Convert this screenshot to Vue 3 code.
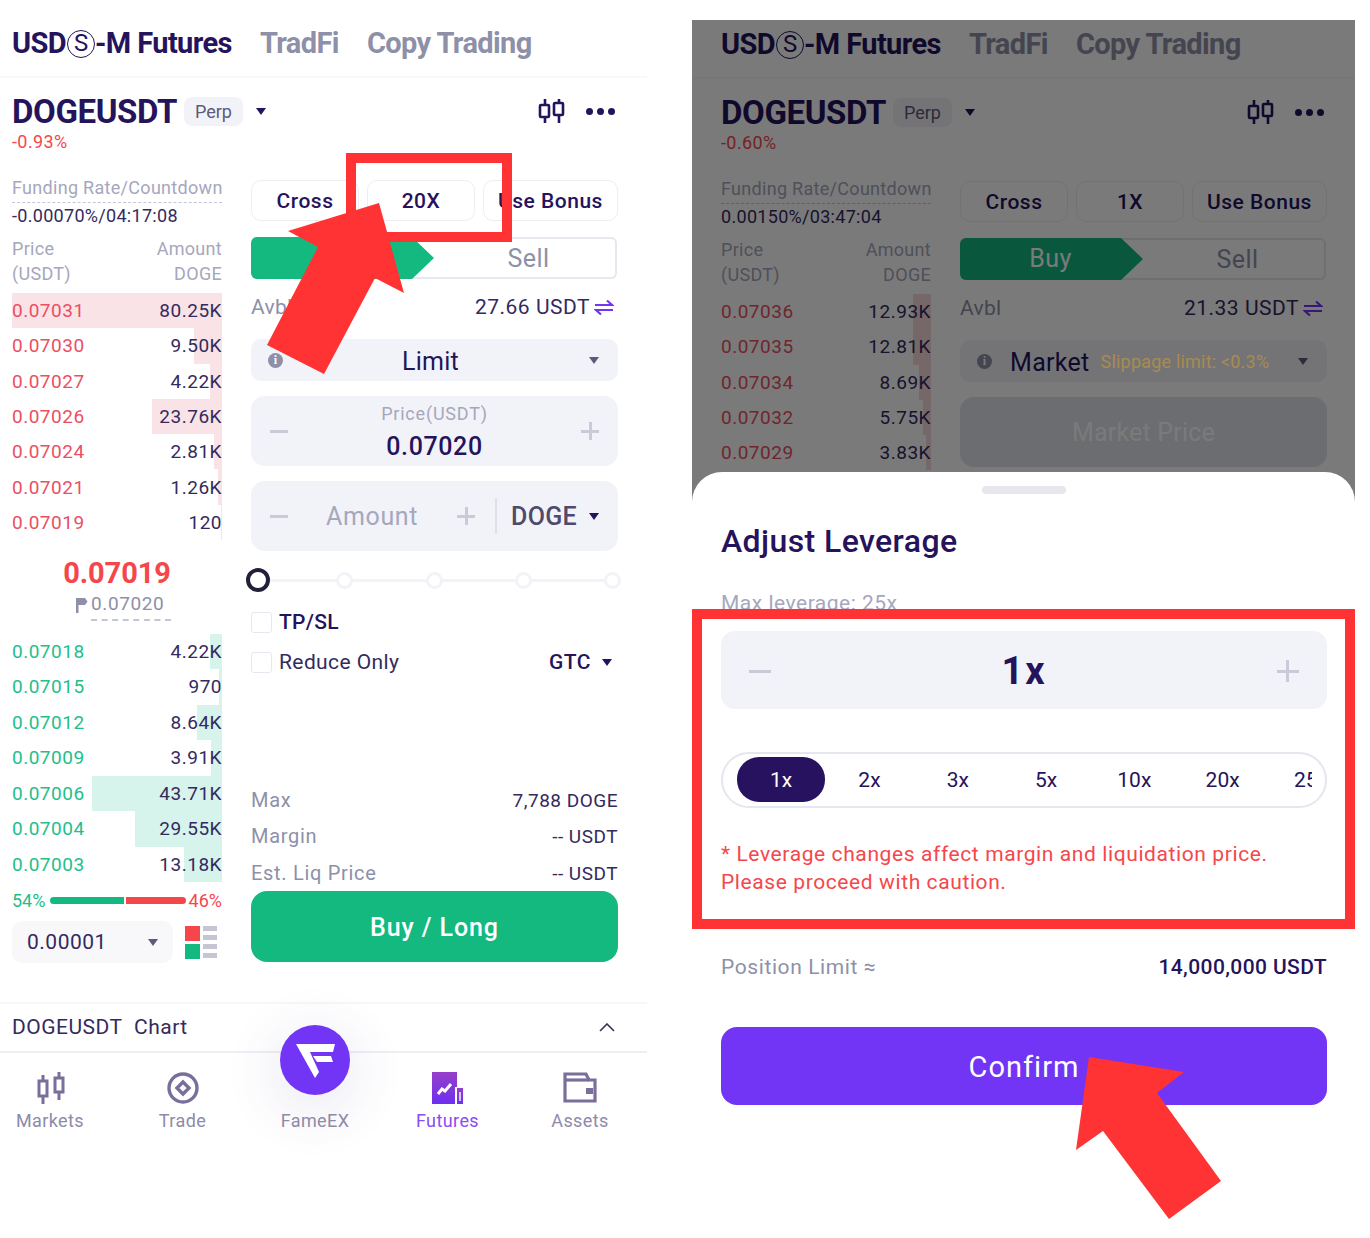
<template>
  <div class="page">
    <section
      v-for="s in screens"
      :key="s.id"
      class="screen"
      :class="s.id"
    >
      <div class="tabs">
        <span class="tab active">USD<span class="circled">S</span>-M Futures</span>
        <span class="tab">TradFi</span>
        <span class="tab">Copy Trading</span>
      </div>

      <div class="head">
        <h1 class="symbol">DOGEUSDT</h1>
        <span class="perp">Perp</span>
        <i class="caret dark head-caret"></i>
        <div class="head-icons">
          <svg width="28" height="26" viewBox="0 0 28 26" fill="none" stroke="#25135c" stroke-width="2.6">
            <path d="M7 1v24M21 1v24" />
            <rect x="2" y="7" width="9" height="12" rx="1" fill="#fff" />
            <rect x="16" y="5" width="9" height="12" rx="1" fill="#fff" />
          </svg>
          <span class="dots"><b></b><b></b><b></b></span>
        </div>
      </div>
      <div class="change">{{ s.change }}</div>

      <div class="trade">
        <div class="book">
          <div class="funding-label">Funding Rate/Countdown</div>
          <div class="funding-value">{{ s.funding }}</div>
          <div class="book-head">
            <div class="book-line"><span>Price</span><span>Amount</span></div>
            <div class="book-line"><span>(USDT)</span><span>DOGE</span></div>
          </div>
          <div v-for="r in s.asks" :key="r.price" class="row ask">
            <i class="depth" :style="{ width: r.depth + 'px' }"></i>
            <span class="price">{{ r.price }}</span>
            <span class="amount">{{ r.amount }}</span>
          </div>
          <template v-if="s.full">
            <div class="last-price">0.07019</div>
            <div class="mark">
              <svg width="13" height="16" viewBox="0 0 13 16" fill="#8e90a8">
                <path d="M1 1h9l2.5 3.5L10 8H3.500v8H1z" />
              </svg>
              <span class="mark-value">0.07020</span>
            </div>
            <div v-for="r in bids" :key="r.price" class="row bid">
              <i class="depth" :style="{ width: r.depth + 'px' }"></i>
              <span class="price">{{ r.price }}</span>
              <span class="amount">{{ r.amount }}</span>
            </div>
            <div class="ratio">
              <span class="up">54%</span>
              <div class="ratio-bar"><i class="g"></i><i class="r"></i></div>
              <span class="down">46%</span>
            </div>
            <div class="precision-row">
              <div class="precision">
                <span>0.00001</span>
                <i class="caret gray"></i>
              </div>
              <div class="layout-icon">
                <div class="squares"><i class="sq-r"></i><i class="sq-g"></i></div>
                <div class="bars"><i></i><i></i><i></i><i></i></div>
              </div>
            </div>
          </template>
        </div>

        <div class="form">
          <div class="options">
            <button class="opt w-s">Cross</button>
            <button class="opt w-s">{{ s.leverage }}</button>
            <button class="opt w-l">Use Bonus</button>
          </div>
          <div class="side">
            <div class="buy">Buy</div>
            <div class="sell">Sell</div>
          </div>
          <div class="avbl">
            <span class="avbl-label">Avbl</span>
            <span class="avbl-value">
              {{ s.avbl }} USDT
              <svg width="20" height="17" viewBox="0 0 20 17" fill="none" stroke="#7335f5" stroke-width="2.2">
                <path d="M1 6h17L13 1.500M19 11H2l5 4.500" />
              </svg>
            </span>
          </div>

          <div class="type">
            <span class="info">i</span>
            <span v-if="s.full" class="type-name center">Limit</span>
            <template v-else>
              <span class="type-name">Market</span>
              <span class="slip">Slippage limit: &lt;0.3%</span>
            </template>
            <i class="caret gray"></i>
          </div>

          <template v-if="s.full">
            <div class="box price-box">
              <i class="minus"></i>
              <div class="box-text">
                <div class="box-label">Price(USDT)</div>
                <div class="box-value">0.07020</div>
              </div>
              <i class="plus"></i>
            </div>
            <div class="box amount-box">
              <i class="minus"></i>
              <span class="amount-text">Amount</span>
              <i class="plus"></i>
              <span class="sep"></span>
              <span class="unit">DOGE</span>
              <i class="caret dark unit-caret"></i>
            </div>
            <div class="slider">
              <i class="thumb"></i>
              <i v-for="n in 4" :key="n" class="node"></i>
            </div>
            <label class="check first"><i></i>TP/SL</label>
            <div class="check-row">
              <label class="check plain"><i></i>Reduce Only</label>
              <span class="gtc">GTC <i class="caret dark"></i></span>
            </div>
            <div class="stat max"><span>Max</span><b>7,788 DOGE</b></div>
            <div class="stat margin"><span>Margin</span><b>-- USDT</b></div>
            <div class="stat liq"><span>Est. Liq Price</span><b>-- USDT</b></div>
            <button class="long">Buy / Long</button>
          </template>
          <div v-else class="box market-box">Market Price</div>
        </div>
      </div>

      <template v-if="s.full">
        <div class="chart-row">
          <span>DOGEUSDT&nbsp;&nbsp;Chart</span>
          <svg width="16" height="9" viewBox="0 0 16 9" fill="none" stroke="#3a3159" stroke-width="1.6">
            <path d="M1 8l7-7 7 7" />
          </svg>
        </div>
        <nav class="tabbar">
          <div class="nav-item">
            <svg width="32" height="32" viewBox="0 0 32 32" fill="none" stroke="#7a6f9b" stroke-width="3">
              <path d="M9 3v29M25 0v28" />
              <rect x="5" y="9" width="8" height="15" fill="#fff" />
              <rect x="21" y="6" width="8" height="14" fill="#fff" />
            </svg>
            <span>Markets</span>
          </div>
          <div class="nav-item">
            <svg width="32" height="32" viewBox="0 0 32 32" fill="none" stroke="#7a6f9b" stroke-width="3.4">
              <circle cx="16" cy="16" r="14" />
              <path d="M16 10l6 6-6 6-6-6z" />
            </svg>
            <span>Trade</span>
          </div>
          <div class="nav-item fame">
            <div class="fab">
              <svg width="70" height="70" viewBox="0 0 70 70" fill="#fff">
                <path d="M16 19h39l-2 8H30l9 20-4 6z" />
                <path d="M33 31h18l2 6H37z" />
              </svg>
            </div>
            <span>FameEX</span>
          </div>
          <div class="nav-item current">
            <svg width="32" height="32" viewBox="0 0 32 32">
              <defs>
                <linearGradient id="futures-fill" x1="0" y1="0" x2="0" y2="1">
                  <stop offset="0" stop-color="#9640c8" />
                  <stop offset="1" stop-color="#6d2ff0" />
                </linearGradient>
              </defs>
              <path d="M0 0h25v15h-2v17H0z" fill="url(#futures-fill)" />
              <path d="M25 16h6v16h-6z" fill="url(#futures-fill)" />
              <path d="M28 20v9" stroke="#fff" stroke-width="1.4" />
              <path d="M6 22l4-5 3 2 6-7" fill="none" stroke="#fff" stroke-width="3" />
            </svg>
            <span>Futures</span>
          </div>
          <div class="nav-item">
            <svg width="34" height="32" viewBox="0 0 34 32" fill="none" stroke="#7a6f9b" stroke-width="3.2">
              <path d="M2 29V2h21l3 6h6v21z" />
              <path d="M2 8h24" />
              <path d="M23 16h7v6h-7z" fill="#7a6f9b" stroke="none" />
            </svg>
            <span>Assets</span>
          </div>
        </nav>
      </template>

      <template v-else>
        <div class="dim"></div>
        <div class="sheet">
          <div class="handle"></div>
          <h2 class="sheet-title">Adjust Leverage</h2>
          <div class="max-lev">Max leverage: 25x</div>
          <div class="stepper">
            <i class="minus"></i>
            <span class="stepper-value">1x</span>
            <i class="plus"></i>
          </div>
          <div class="pills">
            <div class="pills-inner">
              <span
                v-for="(p, i) in levels"
                :key="p"
                class="pill"
                :class="{ on: i === 0 }"
              >{{ p }}</span>
            </div>
          </div>
          <p class="warn">* Leverage changes affect margin and liquidation price.<br>Please proceed with caution.</p>
          <div class="limit"><span>Position Limit ≈</span><b>14,000,000 USDT</b></div>
          <button class="confirm">Confirm</button>
        </div>
      </template>
    </section>

    <svg class="marks" width="1370" height="1238" viewBox="0 0 1370 1238">
      <rect x="351" y="158" width="156" height="79" fill="none" stroke="#ff3333" stroke-width="10" />
      <path d="M379 203L404 293 375 278 324 374 267 345 318 247 288 231z" fill="#ff3333" />
      <rect x="697" y="614" width="653" height="310" fill="none" stroke="#ff3333" stroke-width="10" />
      <path d="M1089 1057L1184 1072 1157 1093 1221 1181 1169 1219 1103 1131 1076 1150z" fill="#ff3333" />
    </svg>
  </div>
</template>

<script setup>
const levels = ["1x", "2x", "3x", "5x", "10x", "20x", "25x"];

const bids = [
  { price: "0.07018", amount: "4.22K", depth: 12 },
  { price: "0.07015", amount: "970", depth: 3 },
  { price: "0.07012", amount: "8.64K", depth: 25 },
  { price: "0.07009", amount: "3.91K", depth: 11 },
  { price: "0.07006", amount: "43.71K", depth: 130 },
  { price: "0.07004", amount: "29.55K", depth: 87 },
  { price: "0.07003", amount: "13.18K", depth: 38 },
];

const screens = [
  {
    id: "left",
    full: true,
    change: "-0.93%",
    funding: "-0.00070%/04:17:08",
    leverage: "20X",
    avbl: "27.66",
    asks: [
      { price: "0.07031", amount: "80.25K", depth: 210 },
      { price: "0.07030", amount: "9.50K", depth: 28 },
      { price: "0.07027", amount: "4.22K", depth: 12 },
      { price: "0.07026", amount: "23.76K", depth: 70 },
      { price: "0.07024", amount: "2.81K", depth: 8 },
      { price: "0.07021", amount: "1.26K", depth: 4 },
      { price: "0.07019", amount: "120", depth: 1 },
    ],
  },
  {
    id: "right",
    full: false,
    change: "-0.60%",
    funding: "0.00150%/03:47:04",
    leverage: "1X",
    avbl: "21.33",
    asks: [
      { price: "0.07036", amount: "12.93K", depth: 18 },
      { price: "0.07035", amount: "12.81K", depth: 18 },
      { price: "0.07034", amount: "8.69K", depth: 12 },
      { price: "0.07032", amount: "5.75K", depth: 8 },
      { price: "0.07029", amount: "3.83K", depth: 5 },
    ],
  },
];
</script>

<style>
html,
body {
  margin: 0;
  background: #fff;
}
</style>

<style scoped>
* {
  box-sizing: border-box;
}

.page {
  position: relative;
  display: flex;
  width: 1370px;
  height: 1238px;
  padding-top: 20px;
  overflow: hidden;
  font-family: Roboto, "Liberation Sans", sans-serif;
  color: #25135c;
  background: #fff;
}

.marks {
  position: absolute;
  left: 0;
  top: 0;
  z-index: 3;
  pointer-events: none;
}

.screen {
  position: relative;
  flex: none;
  --pad: 12px;
  width: 647px;
}

.screen.right {
  --pad: 29px;
  width: 663px;
  height: 1218px;
  margin-left: 45px;
  padding-top: 1px;
  overflow: hidden;
}

.dim {
  position: absolute;
  inset: 0;
  background: rgba(0, 0, 0, 0.52);
}

/* top tabs */
.tabs {
  display: flex;
  align-items: center;
  gap: 28px;
  height: 58px;
  padding: 0 0 10px var(--pad);
  border-bottom: 2px solid #f9f9fb;
}

.tab {
  font-size: 29px;
  font-weight: 700;
  letter-spacing: -0.6px;
  color: #8e90a8;
  white-space: nowrap;
}

.tab.active {
  color: #25135c;
}

.circled {
  display: inline-block;
  width: 28px;
  height: 28px;
  margin: 0 0 0 1px;
  border: 1.5px solid #25135c;
  border-radius: 50%;
  font-size: 24px;
  font-weight: 400;
  line-height: 25px;
  letter-spacing: 0;
  text-align: center;
  vertical-align: 2px;
}

/* symbol head */
.head {
  display: flex;
  align-items: center;
  margin-top: 18px;
  padding-left: var(--pad);
  height: 30px;
  width: calc(606px + var(--pad));
}

.symbol {
  margin: 0;
  font-size: 33px;
  font-weight: 700;
  letter-spacing: -0.4px;
}

.perp {
  display: flex;
  align-items: center;
  justify-content: center;
  width: 59px;
  height: 29px;
  margin-left: 7px;
  border-radius: 8px;
  background: #f2f3f8;
  color: #5c5b7c;
  font-size: 18px;
}

.head-caret {
  margin-left: 13px;
}

.head-icons {
  display: flex;
  align-items: center;
  gap: 20px;
  margin-left: auto;
  margin-right: 3px;
}

.dots {
  display: flex;
  gap: 4px;
}

.dots b {
  width: 7px;
  height: 7px;
  border-radius: 50%;
  background: #25135c;
}

.change {
  margin-top: 4px;
  padding-left: var(--pad);
  height: 24px;
  font-size: 18px;
  line-height: 24px;
  letter-spacing: 0.4px;
  color: #f5474b;
}

.trade {
  display: grid;
  grid-template-columns: 210px 367px;
  column-gap: 29px;
  margin-top: 24px;
  padding-left: var(--pad);
}

/* order book */
.book {
  font-size: 19px;
}

.funding-label {
  height: 25px;
  border-bottom: 1.5px dashed #c5c6d5;
  color: #a5a7bd;
  font-size: 18px;
  line-height: 20px;
  white-space: nowrap;
  letter-spacing: 0.3px;
}

.funding-value {
  height: 26px;
  font-size: 18px;
  line-height: 26px;
  letter-spacing: 0.3px;
  color: #342a5e;
}

.book-head {
  margin: 7px 0;
  color: #a5a7bd;
  font-size: 18px;
  line-height: 25px;
  letter-spacing: 0.3px;
}

.book-line,
.row {
  display: flex;
  justify-content: space-between;
}

.row {
  position: relative;
  height: 35.3px;
  align-items: center;
  letter-spacing: 0.5px;
}

.row.bid {
  height: 35.5px;
}

.row span {
  position: relative;
}

.depth {
  position: absolute;
  top: 0;
  right: 0;
  bottom: 0;
}

.ask .depth {
  background: #f9e3e6;
}

.bid .depth {
  background: #d6f3ec;
}

.ask .price {
  color: #ea4f62;
}

.bid .price {
  color: #1ec08b;
}

.amount {
  color: #342a5e;
}

.right .ask .depth {
  background: #f6d8dc;
}

.last-price {
  margin-top: 16.5px;
  height: 32px;
  color: #f5474b;
  font-size: 29px;
  font-weight: 700;
  line-height: 32px;
  letter-spacing: -0.1px;
  text-align: center;
}

.mark {
  display: flex;
  align-items: center;
  gap: 3px;
  height: 32px;
  margin-bottom: 13px;
  padding-left: 63px;
  color: #8e90a8;
  font-size: 19px;
}

.mark-value {
  width: 80px;
  height: 32px;
  line-height: 30px;
  letter-spacing: 0.6px;
  border-bottom: 2px dashed #c5c6d5;
}

.ratio {
  display: flex;
  align-items: center;
  justify-content: space-between;
  height: 20px;
  margin-top: 8px;
  font-size: 18px;
}

.up {
  color: #1ec08b;
}

.down {
  color: #f5474b;
}

.ratio-bar {
  display: flex;
  gap: 2px;
  width: 136px;
  height: 7px;
  margin-left: 1px;
}

.ratio-bar .g {
  flex: 74;
  background: #14b97f;
  border-radius: 4px 0 0 4px;
}

.ratio-bar .r {
  flex: 60;
  background: #f5474b;
  border-radius: 0 4px 4px 0;
}

.precision-row {
  display: flex;
  align-items: center;
  margin-top: 11px;
}

.precision {
  display: flex;
  align-items: center;
  justify-content: space-between;
  width: 161px;
  height: 42px;
  padding: 0 15px;
  border-radius: 10px;
  background: #f8f8fa;
  font-size: 21px;
  letter-spacing: 0.5px;
  color: #342a5e;
}

.layout-icon {
  display: flex;
  gap: 3px;
  margin-left: 12px;
}

.squares {
  display: flex;
  flex-direction: column;
  gap: 3px;
}

.squares i {
  width: 15px;
  height: 15px;
}

.sq-r {
  background: #f5474b;
}

.sq-g {
  background: #14b97f;
}

.bars {
  display: flex;
  flex-direction: column;
  gap: 4px;
}

.bars i {
  width: 14px;
  height: 5px;
  background: #c5c5d3;
}

/* form */
.form {
  padding-top: 2px;
}

.options {
  display: flex;
  gap: 8px;
}

.opt {
  height: 41px;
  padding: 0;
  border: 1.5px solid #edeef3;
  border-radius: 10px;
  background: #fff;
  font-family: inherit;
  font-size: 21px;
  font-weight: 500;
  letter-spacing: 0.5px;
  color: #25135c;
}

.w-s {
  width: 108px;
}

.w-l {
  width: 135px;
}

.side {
  display: flex;
  height: 42px;
  margin-top: 16px;
  border: 2px solid #e7e8ef;
  border-left: 0;
  border-radius: 6px;
  width: 366px;
  font-size: 25px;
  letter-spacing: 0.4px;
}

.buy {
  width: 183px;
  height: 42px;
  margin-top: -2px;
  padding-right: 2px;
  border-radius: 6px 0 0 6px;
  background: #14b97f;
  clip-path: polygon(0 0, 161px 0, 183px 21px, 161px 42px, 0 42px);
  color: #fff;
  line-height: 42px;
  text-align: center;
}

.sell {
  flex: 1;
  padding-left: 8px;
  line-height: 40px;
  text-align: center;
  color: #8e90a8;
}

.avbl {
  display: flex;
  justify-content: space-between;
  align-items: center;
  height: 28px;
  margin-top: 14px;
  padding-right: 4px;
}

.avbl-label {
  color: #8e90a8;
  font-size: 21px;
  letter-spacing: 0.3px;
}

.avbl-value {
  display: flex;
  align-items: center;
  gap: 4px;
  font-size: 21px;
  letter-spacing: 0.5px;
  color: #342a5e;
}

.type {
  position: relative;
  display: flex;
  align-items: center;
  height: 42px;
  margin-top: 18px;
  padding: 0 19px 0 17px;
  border-radius: 10px;
  background: #f2f3f8;
}

.info {
  width: 15px;
  height: 15px;
  border-radius: 50%;
  background: #8e90a8;
  color: #fff;
  font-family: "Liberation Serif", serif;
  font-size: 12px;
  font-weight: 700;
  line-height: 15px;
  text-align: center;
}

.type-name {
  margin-left: 18px;
  padding-top: 2px;
  font-size: 25px;
  letter-spacing: 0.3px;
}

.type-name.center {
  flex: 1;
  margin-left: 0;
  padding-right: 11px;
  text-align: center;
}

.slip {
  position: relative;
  z-index: 1;
  flex: 1;
  margin-left: 11px;
  color: #a88b50;
  font-size: 18px;
  letter-spacing: 0.2px;
  white-space: nowrap;
}

.caret {
  display: inline-block;
  flex: none;
  width: 0;
  height: 0;
  border-left: 5.5px solid transparent;
  border-right: 5.5px solid transparent;
  border-top: 7px solid;
}

.caret.dark {
  border-top-color: #25135c;
}

.caret.gray {
  border-top-color: #5c5b7c;
}

.box {
  display: flex;
  align-items: center;
  height: 70px;
  margin-top: 15px;
  padding: 0 19px;
  border-radius: 14px;
  background: #f2f3f8;
}

.minus,
.plus {
  position: relative;
  flex: none;
  width: 18px;
  height: 18px;
}

.minus::before,
.plus::before,
.plus::after {
  content: "";
  position: absolute;
  background: #c9cbd9;
}

.minus::before,
.plus::before {
  left: 0;
  top: 8px;
  width: 18px;
  height: 2.5px;
}

.plus::after {
  left: 8px;
  top: 0;
  width: 2.5px;
  height: 18px;
}

.box-text {
  flex: 1;
  padding-top: 3px;
  text-align: center;
}

.box-label {
  color: #a5a7bd;
  font-size: 18px;
  letter-spacing: 0.8px;
  line-height: 20px;
  margin-bottom: 8px;
}

.box-value {
  font-size: 25px;
  font-weight: 500;
  line-height: 30px;
  letter-spacing: 0.6px;
}

.amount-text {
  flex: 1;
  padding-right: 1px;
  color: #a5a7bd;
  font-size: 25px;
  letter-spacing: 0.6px;
  text-align: center;
}

.sep {
  width: 2px;
  height: 36px;
  margin: 0 14px 0 20px;
  background: #dfe0e8;
}

.unit {
  font-size: 25px;
  font-weight: 500;
  letter-spacing: 0.3px;
  color: #4e4a6d;
}

.unit-caret {
  margin-left: 12px;
}

.market-box {
  position: relative;
  justify-content: center;
  background: #e1e3ea;
  color: #fff;
  font-size: 25px;
  letter-spacing: 0.2px;
}

.slider {
  position: relative;
  display: flex;
  align-items: center;
  gap: 72.25px;
  height: 26px;
  margin: 16px 0 0 -5px;
}

.slider::before {
  content: "";
  position: absolute;
  left: 10px;
  right: -2px;
  top: 12px;
  height: 3px;
  background: #f2f3f8;
}

.thumb {
  position: relative;
  flex: none;
  width: 24px;
  height: 24px;
  margin-right: -6px;
  border: 4px solid #20203a;
  border-radius: 50%;
  background: #fff;
}

.node {
  position: relative;
  flex: none;
  width: 17px;
  height: 17px;
  border: 3px solid #f2f3f8;
  border-radius: 50%;
  background: #fff;
}

.check {
  display: flex;
  align-items: center;
  gap: 7px;
  height: 24px;
  font-size: 21px;
  font-weight: 500;
  letter-spacing: 0.3px;
}

.check.first {
  margin-top: 17px;
}

.check.plain {
  font-weight: 400;
  letter-spacing: 0.4px;
  color: #342a5e;
}

.check i {
  width: 21px;
  height: 21px;
  border: 1.5px solid #e7e8ef;
  border-radius: 3px;
}

.check-row {
  display: flex;
  justify-content: space-between;
  align-items: center;
  margin-top: 16px;
}

.gtc {
  display: flex;
  align-items: center;
  gap: 11px;
  padding-right: 6px;
  font-size: 21px;
  font-weight: 500;
  letter-spacing: 0.5px;
}

.stat {
  display: flex;
  justify-content: space-between;
  align-items: center;
  height: 24px;
  color: #8e90a8;
  font-size: 20px;
  letter-spacing: 0.7px;
}

.stat b {
  font-size: 19px;
  font-weight: 400;
  letter-spacing: 0.5px;
  color: #342a5e;
}

.stat.max {
  margin-top: 114px;
}

.stat.margin {
  margin-top: 12px;
}

.stat.liq {
  margin-top: 13px;
}

.long {
  display: block;
  width: 367px;
  height: 71px;
  margin-top: 6px;
  padding-top: 2px;
  border: 0;
  border-radius: 16px;
  background: #14b97f;
  color: #fff;
  font-family: inherit;
  font-size: 25px;
  font-weight: 500;
  letter-spacing: 0.9px;
}

/* bottom */
.chart-row {
  display: flex;
  justify-content: space-between;
  align-items: center;
  height: 51px;
  margin-top: 39px;
  padding: 0 32px 1px var(--pad);
  border-top: 2px solid #f7f7f9;
  border-bottom: 2px solid #eeeef4;
  font-size: 21px;
  letter-spacing: 0.5px;
  color: #342a5e;
}

.tabbar {
  display: flex;
  gap: 32.5px;
}

.nav-item {
  position: relative;
  display: flex;
  flex-direction: column;
  align-items: center;
  width: 100px;
  padding-top: 19px;
  color: #8e8aa8;
  font-size: 18px;
  letter-spacing: 0.4px;
}

.nav-item span {
  position: relative;
  margin-top: 7px;
  line-height: 20px;
}

.nav-item.current {
  color: #8a4cf5;
}

.fame {
  padding-top: 51px;
}

.fab {
  position: absolute;
  left: 15px;
  top: -28px;
  width: 70px;
  height: 70px;
  border-radius: 50%;
  background: #7335f5;
  box-shadow: 0 12px 46px 16px rgba(70, 50, 140, 0.07);
}

.fab svg {
  display: block;
}

/* leverage sheet */
.sheet {
  position: absolute;
  left: 0;
  right: 0;
  top: 452px;
  bottom: 0;
  z-index: 2;
  padding: 14px 28px 0 29px;
  border-radius: 30px 30px 0 0;
  background: #fff;
}

.handle {
  width: 84px;
  height: 8px;
  margin: 0 auto;
  border-radius: 4px;
  background: #e6e6ec;
}

.sheet-title {
  margin: 27px 0 0;
  font-size: 32px;
  font-weight: 500;
  line-height: 40px;
  letter-spacing: 0.4px;
}

.max-lev {
  height: 24px;
  margin-top: 30px;
  color: #a5a7bd;
  font-size: 21px;
  line-height: 24px;
  letter-spacing: 0.5px;
}

.stepper {
  display: flex;
  align-items: center;
  justify-content: space-between;
  height: 78px;
  margin-top: 16px;
  padding: 2px 28px 0;
  border-radius: 14px;
  background: #f2f3f8;
}

.stepper .minus,
.stepper .plus {
  width: 22px;
  height: 22px;
}

.stepper .minus::before,
.stepper .plus::before {
  top: 9.5px;
  width: 22px;
  height: 3px;
}

.stepper .plus::after {
  left: 9.5px;
  width: 3px;
  height: 22px;
}

.stepper-value {
  font-size: 38px;
  font-weight: 700;
  letter-spacing: 2px;
}

.pills {
  height: 56px;
  margin-top: 43px;
  padding: 3px 13px 3px 14px;
  border: 2px solid #e6e7ee;
  border-radius: 28px;
}

.pills-inner {
  display: flex;
  overflow: hidden;
}

.pill {
  flex: none;
  width: 88.3px;
  height: 45px;
  border-radius: 22px;
  font-size: 21px;
  line-height: 46px;
  text-align: center;
  color: #25135c;
}

.pill.on {
  background: #26125e;
  color: #fff;
}

.warn {
  margin: 32px 0 0;
  color: #f5474b;
  font-size: 21px;
  line-height: 28px;
  letter-spacing: 0.6px;
}

.limit {
  display: flex;
  justify-content: space-between;
  align-items: center;
  height: 28px;
  margin-top: 57px;
  color: #8e90a8;
  font-size: 21px;
  letter-spacing: 0.6px;
}

.limit b {
  font-size: 21px;
  font-weight: 500;
  letter-spacing: 0.4px;
  color: #25135c;
}

.confirm {
  display: block;
  width: 100%;
  height: 78px;
  margin-top: 46px;
  padding-top: 2px;
  border: 0;
  border-radius: 16px;
  background: #7335f5;
  color: #fff;
  font-family: inherit;
  font-size: 29px;
  letter-spacing: 1px;
}
</style>
